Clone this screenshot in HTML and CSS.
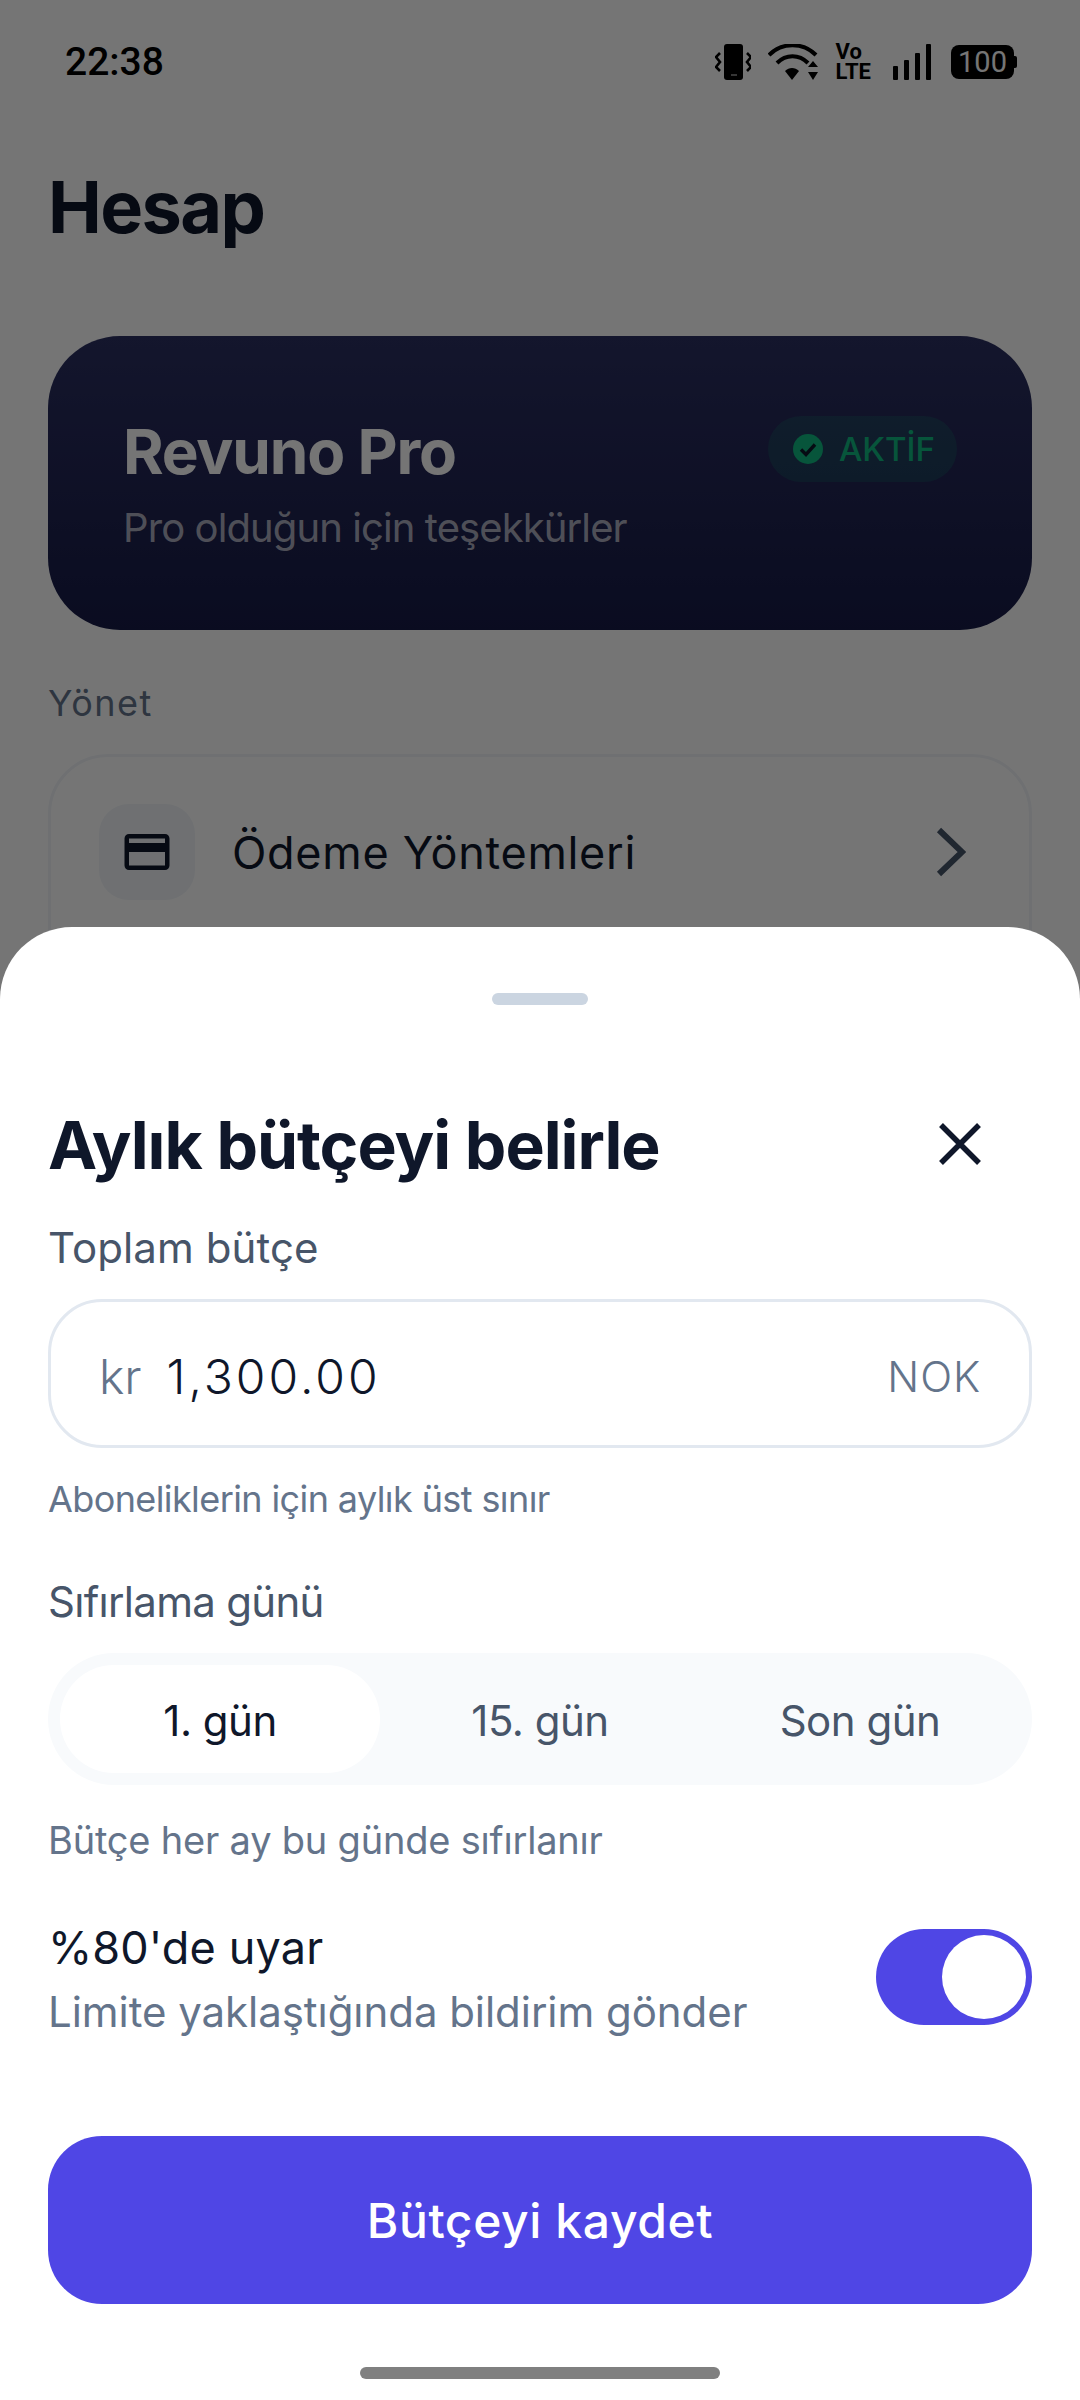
FILE: index.html
```html
<!DOCTYPE html>
<html lang="tr">

<head>
    <meta charset="utf-8">
    <title>Hesap</title>
    <link rel="stylesheet" href="styles.css">
</head>

<body>
    <div class="screen">

        <!-- account page, behind the sheet -->
        <div class="page">
            <div class="status">
                <span class="time">22:38</span>
                <div class="status-icons">
                    <svg class="ic-vibrate" width="36" height="36" viewBox="0 0 36 36">
                        <rect x="9" y="0" width="19" height="36" rx="3" fill="#000" />
                        <rect x="16" y="30" width="6" height="2" fill="#777" />
                        <path d="M5 9 L1 13 L5 18 L1 23 L5 27 M32 9 L36 13 L32 18 L36 23 L32 27" fill="none" stroke="#000" stroke-width="2.6" />
                    </svg>
                    <svg class="ic-wifi" width="50" height="36" viewBox="0 0 50 36">
                        <path d="M1 11 C14 -2 35 -2 48 11" fill="none" stroke="#000" stroke-width="4" />
                        <path d="M9 19 C18 10 31 10 40 19" fill="none" stroke="#000" stroke-width="4" />
                        <path d="M17 27 L24 36 L31 27 C27 23 21 23 17 27 Z" fill="#000" />
                        <path d="M40 23 L45 17 L50 23 Z M40 28 L50 28 L45 36 Z" fill="#000" />
                    </svg>
                    <div class="volte"><span>Vo</span><span>LTE</span></div>
                    <div class="signal">
                        <i class="bar-1"></i><i class="bar-2"></i><i class="bar-3"></i><i class="bar-4"></i>
                    </div>
                    <div class="battery"><span>100</span></div>
                </div>
            </div>

            <h1 class="page-title">Hesap</h1>

            <div class="pro-card">
                <div class="pro-text">
                    <div class="pro-name">Revuno Pro</div>
                    <div class="pro-sub">Pro olduğun için teşekkürler</div>
                </div>
                <div class="pro-badge">
                    <svg width="30" height="30" viewBox="0 0 30 30">
                        <circle cx="15" cy="15" r="15" fill="#10b981" />
                        <path d="M8 15.5 L13 20.5 L22 10.5" fill="none" stroke="#0e1a2b" stroke-width="3.4" />
                    </svg>
                    <span>AKTİF</span>
                </div>
            </div>

            <div class="section-label">Yönet</div>

            <div class="manage-card">
                <div class="manage-row">
                    <div class="manage-icon">
                        <svg width="54" height="54" viewBox="0 0 24 24">
                            <path d="M20 4H4c-1.11 0-1.99.89-1.99 2L2 18c0 1.11.89 2 2 2h16c1.11 0 2-.89 2-2V6c0-1.11-.89-2-2-2zm0 14H4v-6h16v6zm0-10H4V6h16v2z" fill="#0f172a" />
                        </svg>
                    </div>
                    <span class="manage-name">Ödeme Yöntemleri</span>
                    <svg class="chevron" width="30" height="50" viewBox="0 0 30 50">
                        <path d="M3 3 L26 25 L3 47" fill="none" stroke="#475569" stroke-width="6" />
                    </svg>
                </div>
            </div>
        </div>

        <div class="scrim"></div>

        <!-- bottom sheet -->
        <div class="sheet">
            <div class="handle"></div>

            <div class="sheet-head">
                <h2 class="sheet-title">Aylık bütçeyi belirle</h2>
                <svg class="close" width="42" height="42" viewBox="0 0 42 42">
                    <path d="M2 2 L40 40 M40 2 L2 40" fill="none" stroke="#0f172a" stroke-width="5.5" />
                </svg>
            </div>

            <div class="field-label first">Toplam bütçe</div>
            <div class="amount">
                <span class="amount-cur">kr</span>
                <span class="amount-val">1,300.00</span>
                <span class="amount-code">NOK</span>
            </div>
            <div class="hint hint-amount">Aboneliklerin için aylık üst sınır</div>

            <div class="field-label second">Sıfırlama günü</div>
            <div class="segments">
                <div class="segment active">1. gün</div>
                <div class="segment">15. gün</div>
                <div class="segment">Son gün</div>
            </div>
            <div class="hint hint-day">Bütçe her ay bu günde sıfırlanır</div>

            <div class="alert-row">
                <div class="alert-text">
                    <div class="alert-name">%80'de uyar</div>
                    <div class="alert-sub">Limite yaklaştığında bildirim gönder</div>
                </div>
                <div class="toggle"><div class="knob"></div></div>
            </div>

            <div class="save">Bütçeyi kaydet</div>
            <div class="home-bar"></div>
        </div>
    </div>
</body>

</html>
```

FILE: styles.css
```css
* {
    box-sizing: border-box;
}

body {
    margin: 0;
    font-family: Inter, "Noto Sans", sans-serif;
}

.screen {
    position: relative;
    width: 1080px;
    height: 2400px;
    overflow: hidden;
}

.page {
    height: 100%;
    padding: 0 48px;
    background: #fff;
}

.scrim {
    position: absolute;
    top: 0;
    bottom: 0;
    left: 0;
    right: 0;
    background: rgba(0, 0, 0, 0.54);
}

/* status bar */
.status {
    display: flex;
    justify-content: space-between;
    align-items: center;
    height: 124px;
    margin: 0 -48px -2px;
    padding: 0 63px 0 65px;
}

.time {
    font-family: Roboto, sans-serif;
    font-weight: 500;
    font-size: 39px;
    color: #000;
}

.status-icons {
    display: flex;
    align-items: center;
}

.ic-wifi {
    margin-left: 17px;
}

.volte {
    display: flex;
    flex-direction: column;
    margin-left: 18px;
    font-family: Roboto, sans-serif;
    font-weight: 700;
    font-size: 22px;
    line-height: 20px;
    color: #000;
}

.signal {
    display: flex;
    align-items: flex-end;
    gap: 6px;
    height: 36px;
    margin-left: 22px;
}

.signal i {
    width: 5px;
    background: #000;
    border-radius: 1px;
}

.bar-1 {
    height: 14px;
}

.bar-2 {
    height: 20px;
}

.bar-3 {
    height: 27px;
}

.bar-4 {
    height: 36px;
}

.battery {
    position: relative;
    display: flex;
    justify-content: center;
    align-items: center;
    width: 63px;
    height: 34px;
    margin: 0 3px 0 20px;
    background: #000;
    border-radius: 8px;
}

.battery::after {
    content: "";
    position: absolute;
    right: -3px;
    top: 11px;
    width: 3px;
    height: 12px;
    background: #000;
    border-radius: 0 2px 2px 0;
}

.battery span {
    font-family: Roboto, sans-serif;
    font-size: 29px;
    line-height: 34px;
    color: #fff;
}

/* page */
.page-title {
    margin: 40px 0 0;
    font-weight: 700;
    font-size: 72px;
    line-height: 90px;
    letter-spacing: -1.6px;
    color: #0f172a;
}

.pro-card {
    display: flex;
    justify-content: space-between;
    align-items: flex-start;
    height: 294px;
    margin-top: 84px;
    padding: 80px 75px 0 75px;
    background: linear-gradient(#2c3062, #171b47);
    border-radius: 72px;
}

.pro-name {
    font-weight: 700;
    font-size: 62px;
    line-height: 72px;
    letter-spacing: -1.2px;
    color: #fff;
}

.pro-sub {
    margin-top: 13px;
    font-size: 40px;
    line-height: 54px;
    letter-spacing: -0.9px;
    color: rgba(255, 255, 255, 0.65);
}

.pro-badge {
    display: flex;
    align-items: center;
    gap: 16px;
    height: 66px;
    padding: 0 22px 0 25px;
    background: rgba(16, 185, 129, 0.15);
    border-radius: 33px;
    font-weight: 500;
    font-size: 33px;
    color: #10b981;
}

.section-label {
    margin-top: 49px;
    font-size: 36px;
    line-height: 48px;
    letter-spacing: 1.5px;
    color: #64748b;
}

.manage-card {
    height: 400px;
    margin-top: 27px;
    padding: 47px 48px;
    border: 3px solid #f1f5f9;
    border-radius: 60px;
}

.manage-row {
    display: flex;
    align-items: center;
    gap: 37px;
}

.manage-icon {
    display: flex;
    justify-content: center;
    align-items: center;
    width: 96px;
    height: 96px;
    background: #f1f5f9;
    border-radius: 30px;
}

.manage-name {
    flex: 1;
    font-weight: 400;
    font-size: 45px;
    letter-spacing: 0.7px;
    color: #0f172a;
}

.chevron {
    margin-right: 15px;
}

/* sheet */
.sheet {
    position: absolute;
    left: 0;
    right: 0;
    bottom: 0;
    height: 1473px;
    padding: 66px 48px 0;
    background: #fff;
    border-radius: 72px 72px 0 0;
}

.handle {
    width: 96px;
    height: 12px;
    margin: 0 auto;
    background: #cbd5e1;
    border-radius: 6px;
}

.sheet-head {
    display: flex;
    justify-content: space-between;
    align-items: center;
    margin-top: 98px;
}

.sheet-title {
    margin: 0;
    font-weight: 700;
    font-size: 66px;
    line-height: 84px;
    letter-spacing: -1px;
    color: #0f172a;
}

.close {
    margin: 0 51px 3px 0;
}

.field-label {
    font-size: 42px;
    line-height: 54px;
    color: #475569;
}

.field-label.first {
    margin-top: 34px;
    letter-spacing: 0.1px;
}

.field-label.second {
    margin-top: 52px;
    letter-spacing: -0.7px;
}

.amount {
    display: flex;
    align-items: center;
    height: 149px;
    margin-top: 24px;
    padding: 5px 48px 0;
    border: 3px solid #e2e8f0;
    border-radius: 54px;
}

.amount-cur {
    font-weight: 300;
    font-size: 48px;
    color: #64748b;
}

.amount-val {
    flex: 1;
    margin-left: 25px;
    font-weight: 300;
    font-size: 48px;
    letter-spacing: 3px;
    color: #0f172a;
}

.amount-code {
    font-weight: 300;
    font-size: 42px;
    letter-spacing: 0.9px;
    color: #64748b;
}

.hint {
    line-height: 48px;
    color: #64748b;
}

.hint-amount {
    margin-top: 27px;
    font-size: 36px;
    letter-spacing: -0.6px;
}

.hint-day {
    margin-top: 31px;
    font-size: 38px;
    letter-spacing: -0.2px;
}

.segments {
    display: grid;
    grid-template-columns: repeat(3, 1fr);
    height: 132px;
    margin-top: 24px;
    padding: 12px;
    background: #f8fafc;
    border-radius: 66px;
}

.segment {
    display: flex;
    justify-content: center;
    align-items: center;
    padding-top: 2px;
    border-radius: 54px;
    font-size: 42px;
    letter-spacing: -0.5px;
    color: #475569;
}

.segment.active {
    background: #fff;
    color: #0f172a;
}

.alert-row {
    display: flex;
    justify-content: space-between;
    align-items: center;
    margin-top: 54px;
}

.alert-name {
    font-size: 45px;
    line-height: 60px;
    letter-spacing: 0.15px;
    color: #0f172a;
}

.alert-sub {
    margin-top: 7px;
    font-size: 42px;
    line-height: 54px;
    letter-spacing: -0.05px;
    color: #64748b;
}

.toggle {
    display: flex;
    justify-content: flex-end;
    align-items: center;
    width: 156px;
    height: 96px;
    margin-bottom: 3px;
    padding-right: 6px;
    background: #4f46e5;
    border-radius: 48px;
}

.knob {
    width: 84px;
    height: 84px;
    background: #fff;
    border-radius: 50%;
}

.save {
    display: flex;
    justify-content: center;
    align-items: center;
    height: 168px;
    margin-top: 97px;
    background: #4f46e5;
    border-radius: 54px;
    font-weight: 500;
    font-size: 48px;
    letter-spacing: 0.6px;
    color: #fff;
}

.home-bar {
    width: 360px;
    height: 12px;
    margin: 63px auto 0;
    background: #808080;
    border-radius: 6px;
}
```
